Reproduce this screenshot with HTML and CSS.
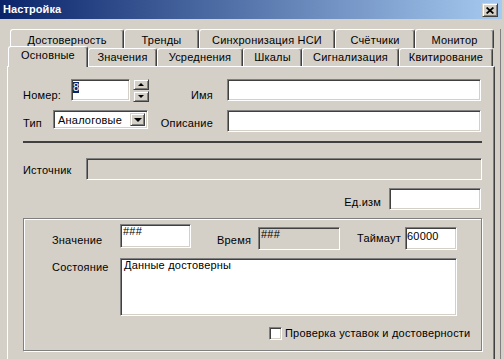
FILE: index.html
```
<!DOCTYPE html>
<html lang="ru">
<head>
<meta charset="UTF-8" />
<meta name="viewport" content="width=device-width, initial-scale=1" />
<title>Настройка</title>
<link rel="stylesheet" href="styles.css">
</head>
<body>

<div class="window">
  <div class="caption">
    <span class="caption-text">Настройка</span>
    <div class="caption-btn raised">
      <svg width="8" height="7" viewBox="0 0 8 7"><path d="M0.6 0.5 L7.4 6.5 M7.4 0.5 L0.6 6.5" stroke="#000" stroke-width="1.7" fill="none"/></svg>
    </div>
  </div>

  <div class="client">
    <div class="tab-row back">
      <div class="tab">Достоверность</div>
      <div class="tab">Тренды</div>
      <div class="tab">Синхронизация НСИ</div>
      <div class="tab">Счётчики</div>
      <div class="tab">Монитор</div>
    </div>
    <div class="tab-row front">
      <div class="tab active">Основные</div>
      <div class="tab">Значения</div>
      <div class="tab">Усреднения</div>
      <div class="tab">Шкалы</div>
      <div class="tab">Сигнализация</div>
      <div class="tab">Квитирование</div>
    </div>

    <div class="page">
      <div class="row row-num">
        <span class="lbl lbl-num">Номер:</span>
        <div class="field num"><span class="sel">8</span></div>
        <div class="spin">
          <div class="raised spin-btn"><i class="arr-up"></i></div>
          <div class="raised spin-btn"><i class="arr-down"></i></div>
        </div>
        <span class="lbl lbl-right">Имя</span>
        <div class="field wide"></div>
      </div>

      <div class="row row-type">
        <span class="lbl lbl-type">Тип</span>
        <div class="field combo">
          <span class="combo-text">Аналоговые</span>
          <div class="raised combo-btn"><i class="arr-drop"></i></div>
        </div>
        <span class="lbl lbl-right">Описание</span>
        <div class="field wide"></div>
      </div>

      <div class="separator"></div>

      <div class="row row-src">
        <span class="lbl lbl-src">Источник</span>
        <div class="field disabled src"></div>
      </div>

      <div class="row row-unit">
        <span class="lbl lbl-unit">Ед.изм</span>
        <div class="field unit"></div>
      </div>

      <div class="group">
        <div class="row row-value">
          <span class="lbl lbl-value">Значение</span>
          <div class="field value">###</div>
          <span class="lbl lbl-time">Время</span>
          <div class="field disabled time">###</div>
          <span class="lbl lbl-timeout">Таймаут</span>
          <div class="field timeout">60000</div>
        </div>

        <div class="row row-state">
          <span class="lbl lbl-state">Состояние</span>
          <div class="field memo">Данные достоверны</div>
        </div>

        <div class="row row-check">
          <div class="field check"></div>
          <span class="lbl">Проверка уставок и достоверности</span>
        </div>
      </div>
    </div>
  </div>
</div>

</body>
</html>
```

FILE: styles.css
```
body { margin: 0; background: #d4d0c8; font-family: "Liberation Sans", Arial, sans-serif; font-size: 11px; letter-spacing: 0.2px; color: #000; }
.window { width: 504px; height: 359px; overflow: hidden; background: #d4d0c8; }

/* заголовок окна */
.caption {
  width: 502px; height: 19px; box-sizing: border-box; padding: 0 4px 0 3px;
  display: flex; align-items: center; justify-content: space-between;
  background: linear-gradient(to right, #0a246a, #a6caf0);
}
.caption-text { color: #fff; font-weight: bold; line-height: 13px; letter-spacing: 0.1px; }
.caption-btn {
  width: 16px; height: 14px; box-sizing: border-box; margin-top: 1px;
  display: flex; align-items: center; justify-content: center;
}

/* объёмные элементы */
.raised {
  background: #d4d0c8; border: 1px solid; border-color: #d4d0c8 #404040 #404040 #d4d0c8;
  box-shadow: inset 1px 1px #fff, inset -1px -1px #808080;
}
.field {
  box-sizing: border-box; background: #fff; border: 1px solid; border-color: #808080 #fff #fff #808080;
  box-shadow: inset 1px 1px #404040, inset -1px -1px #d4d0c8; line-height: 13px;
}
.field.disabled { background: #d4d0c8; }

.client { width: 500px; height: 340px; border-right: 1px solid #808080; }

/* вкладки */
.tab-row { display: flex; }
.tab-row.back { padding-left: 10px; margin-top: 10px; }
.tab {
  box-sizing: border-box; border: 1px solid; border-color: #fff #404040 transparent #fff; border-bottom: none;
  box-shadow: inset -1px 0 #808080; border-radius: 3px 3px 0 0;
  text-align: center; line-height: 13px; white-space: nowrap; background: #d4d0c8;
}
.back .tab { height: 19px; padding-top: 4px; }
.back .tab:nth-child(1) { width: 114px; }
.back .tab:nth-child(2) { width: 75px; }
.back .tab:nth-child(3) { width: 136px; }
.back .tab:nth-child(4) { width: 80px; }
.back .tab:nth-child(5) { width: 79px; }

.front .tab { height: 18px; padding-top: 2px; }
.front .tab.active { width: 80px; height: 21px; margin: -2px 0 -1px 8px; position: relative; z-index: 1; }
.front .tab:nth-child(2) { width: 69px; }
.front .tab:nth-child(3) { width: 86px; }
.front .tab:nth-child(4) { width: 59px; }
.front .tab:nth-child(5) { width: 97px; }
.front .tab:nth-child(6) { width: 94px; }

.page {
  margin-left: 7px; width: 488px; height: 300px; box-sizing: border-box;
  border-top: 1px solid #fff; border-left: 1px solid #fff; border-right: 1px solid #404040;
  box-shadow: inset -1px 0 #808080; padding: 12px 12px 0 15px;
}

.row { display: flex; align-items: flex-start; }
.lbl { line-height: 13px; white-space: nowrap; }

.lbl-num { width: 48px; padding-top: 10px; }
.num { width: 59px; height: 22px; padding: 1px 0 0 1px; }
.sel { display: inline-block; height: 11px; line-height: 11px; background: #0a246a; color: #fff; }
.spin { margin-left: 3px; width: 16px; display: flex; flex-direction: column; gap: 1px; }
.spin-btn { height: 11px; box-sizing: border-box; display: flex; align-items: center; justify-content: center; }
.arr-up { width: 0; height: 0; border-left: 3px solid transparent; border-right: 3px solid transparent; border-bottom: 3px solid #000; }
.arr-down { width: 0; height: 0; border-left: 3px solid transparent; border-right: 3px solid transparent; border-top: 3px solid #000; }
.lbl-right { flex: 1; text-align: right; padding-right: 14px; padding-top: 10px; }
.wide { width: 254px; height: 22px; margin-right: 1px; }

.row-type { margin-top: 8px; }
.row-type .lbl { padding-top: 7px; }
.lbl-type { width: 30px; }
.combo { width: 95px; height: 19px; display: flex; padding: 2px; }
.combo-text { flex: 1; padding: 1px 0 0 2px; }
.combo-btn { width: 15px; box-sizing: border-box; display: flex; align-items: center; justify-content: center; }
.arr-drop { width: 0; height: 0; border-left: 4px solid transparent; border-right: 4px solid transparent; border-top: 4px solid #000; }

.separator { margin-top: 9px; height: 2px; background: #404040; }

.row-src { margin-top: 15px; }
.lbl-src { width: 63px; padding-top: 6px; }
.src { flex: 1; height: 22px; }

.row-unit { margin-top: 8px; justify-content: flex-end; }
.lbl-unit { padding-top: 8px; margin-right: 8px; }
.unit { width: 92px; height: 22px; margin-right: 1px; }

/* группа значений */
.group {
  margin-top: 8px; width: 459px; height: 133px; box-sizing: border-box;
  border: 1px solid #808080; box-shadow: inset 1px 1px #fff, 1px 1px #fff;
  padding: 5px 0 0 28px;
}
.lbl-value { width: 68px; padding-top: 10px; }
.value { width: 71px; height: 24px; padding-left: 2px; }
.lbl-time { margin-left: 26px; width: 41px; padding-top: 10px; }
.time { width: 82px; height: 23px; margin-top: 3px; padding-left: 2px; }
.lbl-timeout { margin-left: 17px; width: 48px; padding-top: 8px; }
.timeout { width: 52px; height: 23px; margin-top: 3px; padding: 2px 0 0 1px; }

.row-state { margin-top: 8px; }
.lbl-state { width: 68px; padding-top: 3px; }
.memo { width: 337px; height: 58px; padding-left: 3px; }

.row-check { margin-top: 11px; padding-left: 217px; }
.check { width: 13px; height: 13px; margin-right: 3px; }
```
